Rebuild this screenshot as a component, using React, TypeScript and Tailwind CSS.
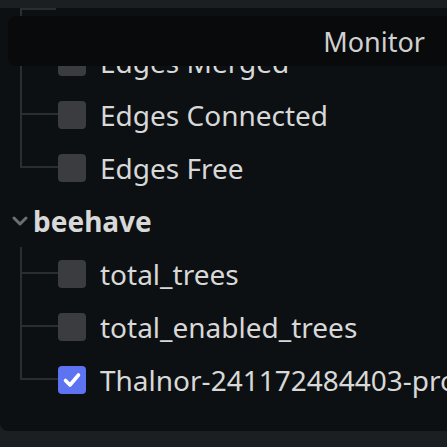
import React from 'react';

type Item = { label: string; checked?: boolean; last?: boolean };

const font = { fontFamily: '"Noto Sans", "Open Sans", sans-serif' };

const Checkbox: React.FC<{ checked?: boolean }> = ({ checked }) =>
  checked ? (
    <div className="w-[28px] h-[28px] rounded-[4px] bg-[#5d73f2] flex items-center justify-center shrink-0">
      <svg width="20" height="20" viewBox="0 0 20 20">
        <path d="M3.5 10.5 L8 15 L16.5 5" fill="none" stroke="#ffffff" strokeWidth="3.6" strokeLinecap="round" strokeLinejoin="round" />
      </svg>
    </div>
  ) : (
    <div className="w-[28px] h-[28px] rounded-[4px] bg-[#3a3c3f] shrink-0" />
  );

// tree guide: vertical line on the left, elbow into the row's centre
const Guide: React.FC<{ last?: boolean }> = ({ last }) => (
  <div className="w-[38px] self-stretch flex flex-col shrink-0">
    <div className="h-1/2 border-l-2 border-b-2 border-[#2b2e31]" />
    <div className={`flex-1 ${last ? '' : 'border-l-2 border-[#2b2e31]'}`} />
  </div>
);

const Row: React.FC<Item> = ({ label, checked, last }) => (
  <div className="flex items-center h-[53px] pl-[20px]">
    <Guide last={last} />
    <Checkbox checked={checked} />
    <span className="ml-[14px] text-[28px] text-[#d8d8d8] whitespace-nowrap leading-none">{label}</span>
  </div>
);

export default function App() {
  return (
    <div className="w-[447px] h-[447px] bg-[#1c1f22] overflow-hidden relative" style={font}>
      <div className="mt-[8px] h-[423px] bg-[#0d1012] rounded-bl-[8px] overflow-hidden flex flex-col">
        {/* end of the previous, scrolled-off row */}
        <div className="h-[27px] pl-[20px] flex shrink-0">
          <div className="w-[36px] border-l-2 border-t-2 border-[#2b2e31]" />
        </div>
        <Row label="Edges Merged" />
        <Row label="Edges Connected" />
        <Row label="Edges Free" last />
        <div className="flex items-center h-[53px] pl-[12px] shrink-0">
          <svg width="16" height="10" viewBox="0 0 16 10" className="shrink-0">
            <path d="M2 2 L8 8 L14 2" fill="none" stroke="#6b6e72" strokeWidth="3" strokeLinecap="round" strokeLinejoin="round" />
          </svg>
          <span className="ml-[5px] text-[28px] font-bold text-[#d8d8d8] leading-none">beehave</span>
        </div>
        <Row label="total_trees" />
        <Row label="total_enabled_trees" />
        <Row label="Thalnor-241172484403-profile" checked last />
      </div>
      {/* tooltip overlay */}
      <div className="absolute left-[8px] top-[16px] right-[-20px] h-[50px] rounded-[8px] bg-[#090a0b] flex items-center justify-end pr-[42px]">
        <span className="text-[27px] text-[#d0d0d0] leading-none">Monitor</span>
      </div>
    </div>
  );
}
